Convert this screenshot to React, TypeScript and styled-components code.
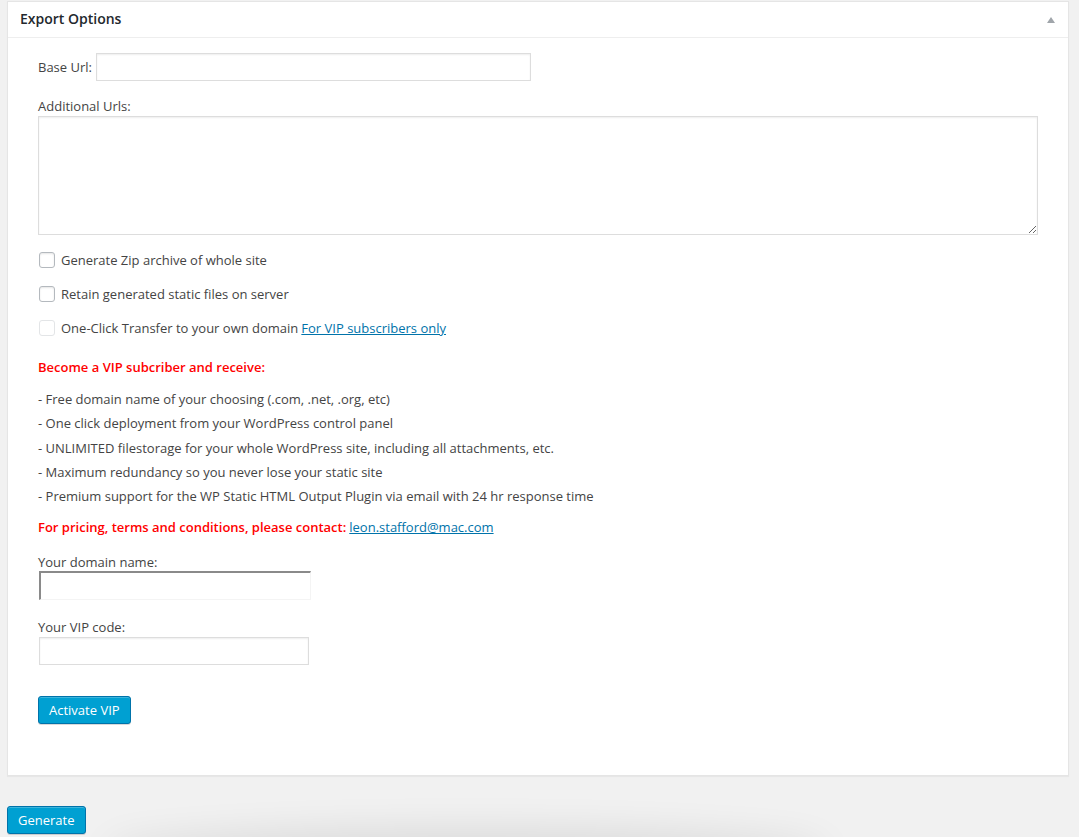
import React from 'react'
import styled, { createGlobalStyle, css } from 'styled-components'

const GlobalStyle = createGlobalStyle`
  html, body {
    margin: 0;
    padding: 0;
    background: #f1f1f1;
    overflow: hidden;
  }
  body {
    font-family: 'Open Sans', 'Liberation Sans', sans-serif;
    font-size: 13px;
    color: #444;
  }
`

const Page = styled.div`
  padding: 1px 10px 0 7px;
`

const Postbox = styled.div`
  background: #fff;
  border: 1px solid #e5e5e5;
  box-shadow: 0 1px 1px rgba(0, 0, 0, 0.04);
`

const Header = styled.div`
  display: flex;
  align-items: center;
  justify-content: space-between;
  height: 35px;
  padding: 0 13px 0 12px;
  border-bottom: 1px solid #eee;
`

const Title = styled.h3`
  margin: -2px 0 0;
  font-size: 14px;
  font-weight: 600;
  color: #23282d;
  line-height: 1.4;
`

const ToggleArrow = styled.span`
  width: 0;
  height: 0;
  border-left: 4px solid transparent;
  border-right: 4px solid transparent;
  border-bottom: 6px solid #a0a5aa;
  margin-top: 1px;
`

const Inside = styled.div`
  display: flex;
  flex-direction: column;
  padding: 15px 30px 51px 30px;
`

const InlineRow = styled.div`
  display: flex;
  align-items: center;
  gap: 4px;
`

const Label = styled.label<{ $mt?: number }>`
  display: block;
  line-height: 20px;
  margin-top: ${({ $mt }) => $mt ?? 0}px;
`

const textFieldBase = css`
  box-sizing: border-box;
  background: #fff;
  border: 1px solid #ddd;
  box-shadow: inset 0 1px 2px rgba(0, 0, 0, 0.07);
  font-family: inherit;
  font-size: 14px;
  color: #32373c;
  outline: none;
`

const TextInput = styled.input<{ $width: number; $indent?: number }>`
  ${textFieldBase};
  width: ${({ $width }) => $width}px;
  height: 28px;
  margin: 0 0 0 ${({ $indent }) => $indent ?? 0}px;
  padding: 3px 5px;
`

const InsetInput = styled.input`
  box-sizing: border-box;
  width: 272px;
  height: 29px;
  margin: -1px 0 0 1px;
  padding: 2px 4px;
  background: #fff;
  border-style: solid;
  border-width: 2px 1px 1px 2px;
  border-color: #8a8a8a #f4f4f4 #f4f4f4 #8a8a8a;
  font-family: inherit;
  font-size: 13px;
  outline: none;
`

const TextArea = styled.textarea`
  ${textFieldBase};
  display: block;
  width: 100%;
  height: 119px;
  margin: 0;
  padding: 4px 6px;
`

const CheckList = styled.div`
  display: flex;
  flex-direction: column;
  gap: 14px;
  margin-top: 15px;
`

const CheckRow = styled.label`
  display: flex;
  align-items: center;
  gap: 6px;
  line-height: 20px;
`

const Box = styled.input.attrs({ type: 'checkbox' })`
  appearance: none;
  box-sizing: border-box;
  width: 16px;
  height: 16px;
  margin: 0 0 0 1px;
  background: #fff;
  border: 1px solid #b4b9be;
  border-radius: 3px;
  box-shadow: inset 0 1px 2px rgba(0, 0, 0, 0.1);

  &:disabled {
    border-color: #e3e5e7;
    box-shadow: none;
  }
`

const Link = styled.a`
  color: #0073aa;
  text-decoration: underline;
  margin-left: 3px;
`

const Notice = styled.p<{ $mt: number }>`
  margin: ${({ $mt }) => $mt}px 0 0;
  color: #f00;
  font-weight: 600;
  line-height: 20px;

  a {
    font-weight: 400;
  }
`

const Perks = styled.ul`
  list-style: none;
  margin: 10px 0 0;
  padding: 0;
`

const Perk = styled.li`
  line-height: 24.25px;
  color: #444;
`

const Button = styled.button<{ $mt?: number }>`
  position: relative;
  box-sizing: border-box;
  height: 28px;
  padding: 0 10px 1px;
  margin-top: ${({ $mt }) => $mt ?? 0}px;
  align-self: flex-start;
  background: #00a0d2;
  border: 1px solid #0073aa;
  border-radius: 3px;
  box-shadow: inset 0 1px 0 rgba(120, 200, 230, 0.5), 0 1px 0 rgba(0, 0, 0, 0.15);
  color: #fff;
  font-family: inherit;
  font-size: 13px;
  line-height: 26px;
  cursor: pointer;
`

const Footer = styled.div`
  position: relative;
  margin-top: 30px;
  height: 40px;
`

const FloorShadow = styled.div`
  position: absolute;
  left: 110px;
  width: 700px;
  top: 42px;
  height: 20px;
  border-radius: 50%;
  box-shadow: 0 -6px 36px 14px rgba(0, 0, 0, 0.09);
  pointer-events: none;
`

const perks = [
  '- Free domain name of your choosing (.com, .net, .org, etc)',
  '- One click deployment from your WordPress control panel',
  '- UNLIMITED filestorage for your whole WordPress site, including all attachments, etc.',
  '- Maximum redundancy so you never lose your static site',
  '- Premium support for the WP Static HTML Output Plugin via email with 24 hr response time',
]

export default function App() {
  return (
    <>
      <GlobalStyle />
      <Page>
        <Postbox>
          <Header>
            <Title>Export Options</Title>
            <ToggleArrow />
          </Header>
          <Inside>
            <InlineRow>
              <label>Base Url:</label>
              <TextInput $width={435} />
            </InlineRow>

            <Label $mt={15}>Additional Urls:</Label>
            <TextArea />

            <CheckList>
              <CheckRow>
                <Box />
                Generate Zip archive of whole site
              </CheckRow>
              <CheckRow>
                <Box />
                Retain generated static files on server
              </CheckRow>
              <CheckRow>
                <Box disabled />
                <span>
                  One-Click Transfer to your own domain
                  <Link href="#">For VIP subscribers only</Link>
                </span>
              </CheckRow>
            </CheckList>

            <Notice $mt={19}>Become a VIP subcriber and receive:</Notice>
            <Perks>
              {perks.map((p) => (
                <Perk key={p}>{p}</Perk>
              ))}
            </Perks>
            <Notice $mt={9}>
              For pricing, terms and conditions, please contact:
              <Link href="#">leon.stafford@mac.com</Link>
            </Notice>

            <Label $mt={15}>Your domain name:</Label>
            <InsetInput />

            <Label $mt={17}>Your VIP code:</Label>
            <TextInput $width={270} $indent={1} />

            <Button $mt={31}>Activate VIP</Button>
          </Inside>
        </Postbox>
        <Footer>
          <FloorShadow />
          <Button>Generate</Button>
        </Footer>
      </Page>
    </>
  )
}
